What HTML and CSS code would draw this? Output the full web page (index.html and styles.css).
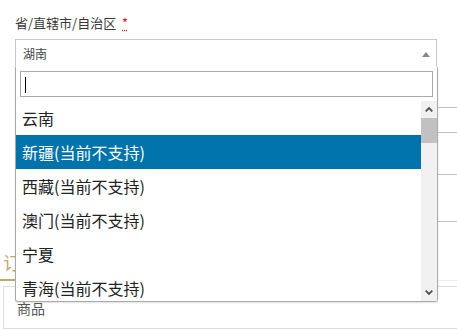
FILE: index.html
```html
<!DOCTYPE html>
<html lang="zh-CN">
<head>
<meta charset="utf-8">
<title>省/直辖市/自治区</title>
<link rel="stylesheet" href="styles.css">
</head>
<body>
<div class="page">
  <div class="field">
    <label class="lbl">省/直辖市/自治区 <abbr class="req" title="必填">*</abbr></label>
    <div class="select-wrap">
      <div class="select">
        <span class="select-text">湖南</span>
        <span class="arrow"></span>
      </div>
      <div class="dropdown">
        <div class="search">
          <div class="search-input"><span class="caret"></span></div>
        </div>
        <div class="results">
          <ul class="options">
            <li class="opt">云南</li>
            <li class="opt hl">新疆(当前不支持)</li>
            <li class="opt">西藏(当前不支持)</li>
            <li class="opt">澳门(当前不支持)</li>
            <li class="opt">宁夏</li>
            <li class="opt">青海(当前不支持)</li>
          </ul>
          <div class="scrollbar">
            <div class="sb-btn">
              <svg width="8" height="5" viewBox="0 0 8 5"><path d="M0.7 4.3 L4 1 L7.3 4.3" fill="none" stroke="#505050" stroke-width="1.8"/></svg>
            </div>
            <div class="sb-thumb"></div>
            <div class="sb-track"></div>
            <div class="sb-btn">
              <svg width="8" height="5" viewBox="0 0 8 5"><path d="M0.7 0.7 L4 4 L7.3 0.7" fill="none" stroke="#505050" stroke-width="1.8"/></svg>
            </div>
          </div>
        </div>
      </div>
    </div>
  </div>

  <div class="bg-field short"></div>
  <div class="bg-field tall"></div>

  <div class="tabs"><span class="tab">订单</span></div>
  <div class="table"><div class="th">商品</div></div>
</div>
</body>
</html>
```

FILE: styles.css
```css
html, body {
  margin: 0;
  padding: 0;
  background: #fff;
}
body {
  font-family: "Noto Sans CJK SC", "Noto Sans", sans-serif;
  width: 457px;
  height: 329px;
  overflow: hidden;
}
.page {
  padding-top: 14px;
}
.field {
  padding-left: 15px;
}
.lbl {
  display: block;
  font-size: 13px;
  line-height: 18px;
  color: #3a3a3a;
}
.req {
  color: #e01010;
  margin-left: 3px;
  text-decoration: underline dotted;
  text-underline-offset: 2px;
}
.select-wrap {
  position: relative;
  margin-top: 7px;
  width: 422px;
}
.select {
  box-sizing: border-box;
  height: 28px;
  border: 1px solid #c8c8c8;
  border-bottom-color: #fff;
  display: flex;
  align-items: center;
  justify-content: space-between;
  padding: 2px 6px 0 7px;
  background: #fff;
}
.select-text {
  font-size: 12px;
  line-height: 24px;
  color: #444;
}
.arrow {
  width: 0;
  height: 0;
  border-style: solid;
  border-width: 0 4px 5px 4px;
  border-color: transparent transparent #888 transparent;
}
.dropdown {
  position: absolute;
  top: 28px;
  left: 0;
  width: 423px;
  box-sizing: border-box;
  border: 1px solid #aaa;
  border-top: none;
  border-radius: 0 0 3px 3px;
  background: #fff;
  box-shadow: 0 1px 2px rgba(0, 0, 0, 0.12);
  z-index: 10;
}
.search {
  padding: 4px;
}
.search-input {
  box-sizing: border-box;
  height: 26px;
  border: 1px solid #aaa;
  padding: 5px 0 0 4px;
}
.caret {
  display: block;
  width: 1px;
  height: 16px;
  background: #000;
}
.results {
  display: flex;
  height: 200px;
  overflow: hidden;
}
.options {
  flex: 1;
  margin: 0;
  padding: 0;
  list-style: none;
  overflow: hidden;
}
.opt {
  font-size: 16px;
  line-height: 22px;
  padding: 6px 6px;
  color: #222;
  white-space: nowrap;
}
.opt.hl {
  background: #0073aa;
  color: #fff;
}
.scrollbar {
  width: 16px;
  background: #f1f1f1;
  display: flex;
  flex-direction: column;
}
.sb-btn {
  height: 17px;
  display: flex;
  align-items: center;
  justify-content: center;
}
.sb-thumb {
  height: 25px;
  background: #c1c1c1;
}
.sb-track {
  flex: 1;
}
.bg-field {
  margin-left: 15px;
  border-top: 1px solid #c4c4c4;
  border-bottom: 1px solid #c4c4c4;
  box-sizing: border-box;
}
.bg-field.short {
  margin-top: 40px;
  height: 26px;
}
.bg-field.tall {
  margin-top: 41px;
  height: 48px;
}
.tabs {
  margin-top: 28px;
  border-bottom: 1px solid #eee;
  display: flex;
}
.tab {
  font-size: 18px;
  line-height: 24px;
  color: #c9a46b;
  padding: 0 8px 5px 3px;
  border-bottom: 2px solid #c9a46b;
  margin-bottom: -1px;
}
.table {
  margin-top: 5px;
  margin-left: 3px;
  height: 43px;
  box-sizing: border-box;
  border: 1px solid #ddd;
  border-right: none;
  padding: 12px 0 0 13px;
}
.th {
  font-size: 14px;
  line-height: 18px;
  color: #555;
}
```
